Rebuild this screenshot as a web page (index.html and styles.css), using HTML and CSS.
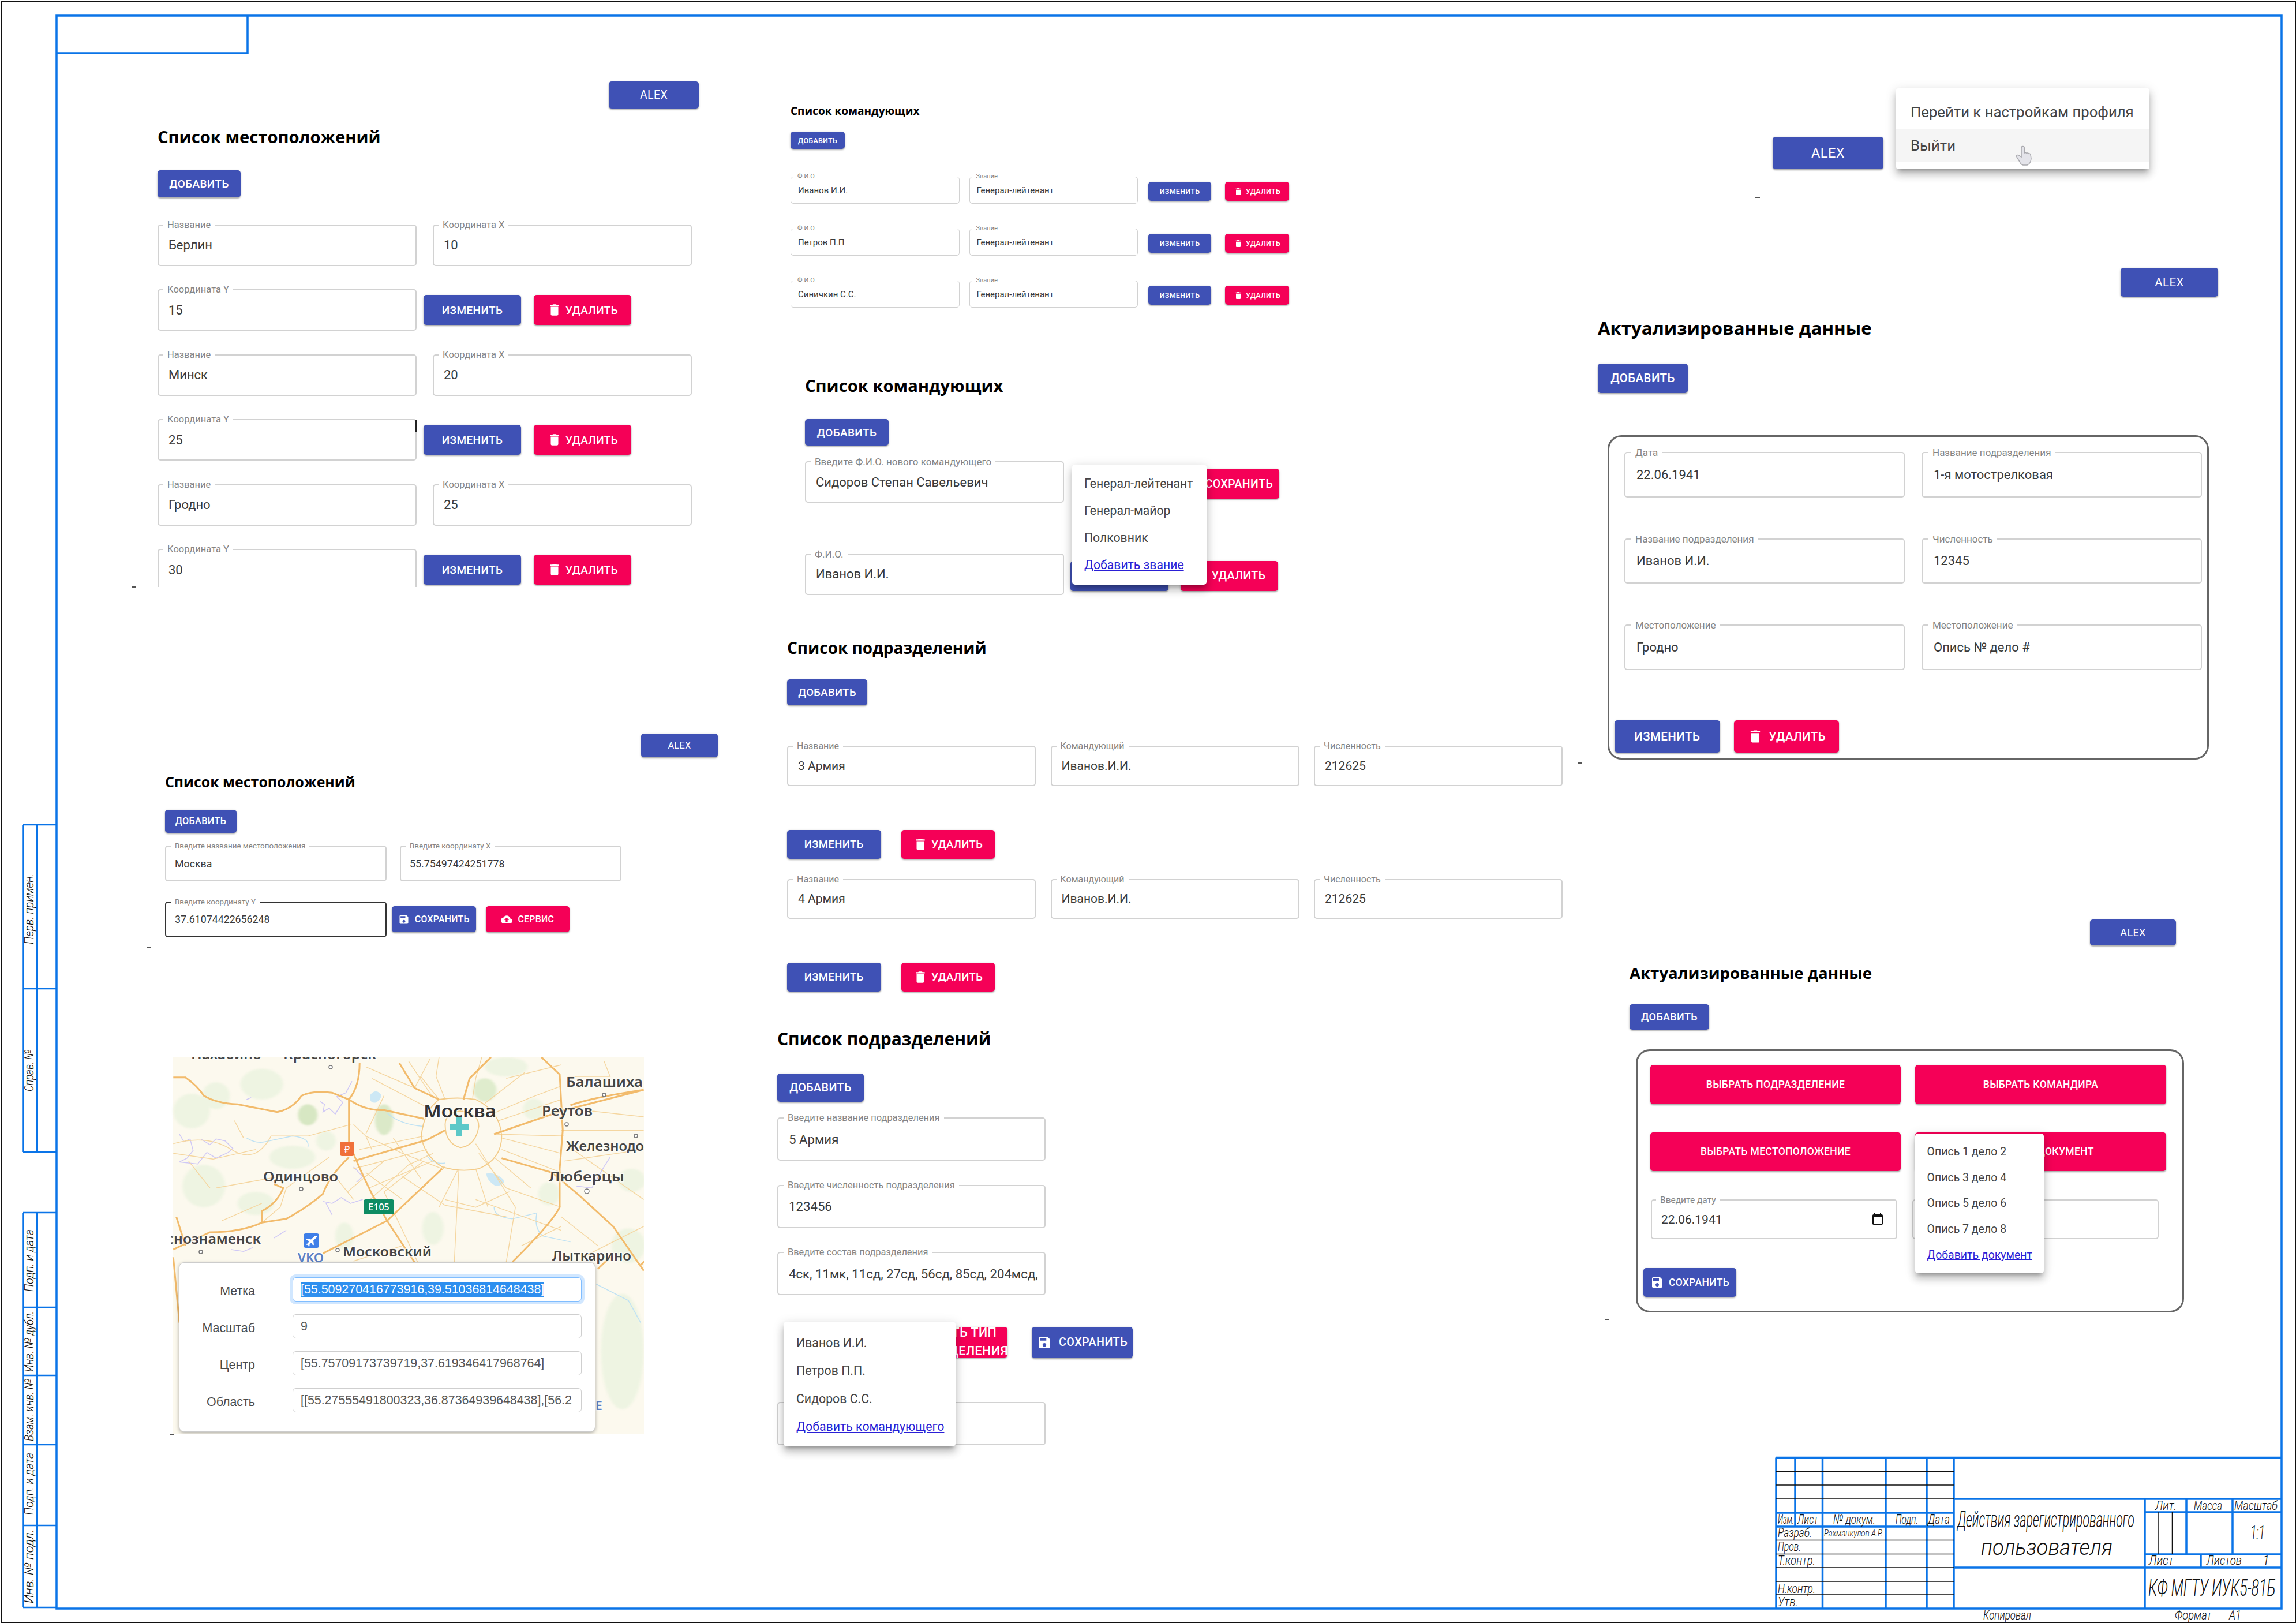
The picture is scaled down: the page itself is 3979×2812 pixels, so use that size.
FILE: index.html
```html
<!DOCTYPE html>
<html lang="ru">
<head>
    <meta charset="UTF-8">
    <title>Действия зарегистрированного пользователя</title>
    <link rel="stylesheet" href="styles.css">
</head>
<body>
<svg class="sprite" aria-hidden="true">
    <symbol id="i-trash" viewBox="0 0 24 24"><path d="M6 19c0 1.1.9 2 2 2h8c1.1 0 2-.9 2-2V7H6v12zM19 4h-3.5l-1-1h-5l-1 1H5v2h14V4z"/></symbol>
    <symbol id="i-save" viewBox="0 0 24 24"><path d="M17 3H5c-1.11 0-2 .9-2 2v14c0 1.1.89 2 2 2h14c1.1 0 2-.9 2-2V7l-4-4zm-5 16c-1.66 0-3-1.34-3-3s1.34-3 3-3 3 1.34 3 3-1.34 3-3 3zm3-10H5V5h10v4z"/></symbol>
    <symbol id="i-cloud" viewBox="0 0 24 24"><path d="M19.35 10.04C18.67 6.59 15.64 4 12 4 9.11 4 6.6 5.64 5.35 8.04 2.34 8.36 0 10.91 0 14c0 3.31 2.69 6 6 6h13c2.76 0 5-2.24 5-5 0-2.64-2.05-4.78-4.65-4.96zM14 13v4h-4v-4H7l5-5 5 5h-3z"/></symbol>
    <symbol id="i-cal" viewBox="0 0 24 24"><path d="M19 3h-1V1h-2v2H8V1H6v2H5C3.9 3 3 3.9 3 5v14c0 1.1.9 2 2 2h14c1.1 0 2-.9 2-2V5c0-1.1-.9-2-2-2zm0 16H5V8h14v11z"/></symbol>
</svg>

<div class="sheet">

    <!-- locations, list -->
    <section class="shot shot-a">
        <button class="btn blue alex">Alex</button>
        <h2>Список местоположений</h2>
        <button class="btn blue add">Добавить</button>
        <div class="list">
            <div class="row fields">
                <div class="field"><span class="label">Название</span>Берлин</div>
                <div class="field"><span class="label">Координата X</span>10</div>
            </div>
            <div class="row">
                <div class="field"><span class="label">Координата Y</span>15</div>
                <button class="btn blue edit">Изменить</button>
                <button class="btn pink del"><svg class="ico"><use href="#i-trash"/></svg>Удалить</button>
            </div>
            <div class="row fields">
                <div class="field"><span class="label">Название</span>Минск</div>
                <div class="field"><span class="label">Координата X</span>20</div>
            </div>
            <div class="row">
                <div class="field"><span class="label">Координата Y</span>25</div>
                <button class="btn blue edit">Изменить</button>
                <button class="btn pink del"><svg class="ico"><use href="#i-trash"/></svg>Удалить</button>
            </div>
            <div class="row fields">
                <div class="field"><span class="label">Название</span>Гродно</div>
                <div class="field"><span class="label">Координата X</span>25</div>
            </div>
            <div class="row">
                <div class="field"><span class="label">Координата Y</span>30</div>
                <button class="btn blue edit">Изменить</button>
                <button class="btn pink del"><svg class="ico"><use href="#i-trash"/></svg>Удалить</button>
            </div>
        </div>
    </section>

    <!-- commanders, small -->
    <section class="shot shot-b">
        <h2>Список командующих</h2>
        <button class="btn blue add">Добавить</button>
        <div class="list">
            <div class="row">
                <div class="field"><span class="label">Ф.И.О.</span>Иванов И.И.</div>
                <div class="field"><span class="label">Звание</span>Генерал-лейтенант</div>
                <button class="btn blue edit">Изменить</button>
                <button class="btn pink del"><svg class="ico"><use href="#i-trash"/></svg>Удалить</button>
            </div>
            <div class="row">
                <div class="field"><span class="label">Ф.И.О.</span>Петров П.П</div>
                <div class="field"><span class="label">Звание</span>Генерал-лейтенант</div>
                <button class="btn blue edit">Изменить</button>
                <button class="btn pink del"><svg class="ico"><use href="#i-trash"/></svg>Удалить</button>
            </div>
            <div class="row">
                <div class="field"><span class="label">Ф.И.О.</span>Синичкин С.С.</div>
                <div class="field"><span class="label">Звание</span>Генерал-лейтенант</div>
                <button class="btn blue edit">Изменить</button>
                <button class="btn pink del"><svg class="ico"><use href="#i-trash"/></svg>Удалить</button>
            </div>
        </div>
    </section>

    <!-- commanders, rank menu open -->
    <section class="shot shot-c">
        <h2>Список командующих</h2>
        <button class="btn blue add">Добавить</button>
        <div class="list">
            <div class="row">
                <div class="field"><span class="label">Введите Ф.И.О. нового командующего</span>Сидоров Степан Савельевич</div>
                <button class="btn pink save-new">Сохранить</button>
            </div>
            <div class="row">
                <div class="field"><span class="label">Ф.И.О.</span>Иванов И.И.</div>
                <button class="btn blue edit">Изменить</button>
                <button class="btn pink del"><svg class="ico"><use href="#i-trash"/></svg>Удалить</button>
            </div>
        </div>
        <ul class="menu">
            <li>Генерал-лейтенант</li>
            <li>Генерал-майор</li>
            <li>Полковник</li>
            <li><a href="#">Добавить звание</a></li>
        </ul>
    </section>

    <!-- profile menu -->
    <section class="shot shot-g">
        <button class="btn blue alex">Alex</button>
        <ul class="menu">
            <li>Перейти к настройкам профиля</li>
            <li class="hover">Выйти</li>
        </ul>
        <svg class="hand" viewBox="0 0 32 36"><path d="M10 4a2.6 2.6 0 0 1 5.2 0v9c1-.8 3-.8 3.8.4 1-.7 3-.5 3.6.8 1-.5 3-.2 3.4 1.5L27 23q-1 9-7 11h-7q-4-1-6-6L2 20q-1-3 1.5-3.5q2-.5 4 2L10 20z"/></svg>
    </section>

    <!-- actual data, filled card -->
    <section class="shot shot-h">
        <button class="btn blue alex">Alex</button>
        <h2>Актуализированные данные</h2>
        <button class="btn blue add">Добавить</button>
        <div class="card">
            <div class="grid">
                <div class="field"><span class="label">Дата</span>22.06.1941</div>
                <div class="field"><span class="label">Название подразделения</span>1-я мотострелковая</div>
                <div class="field"><span class="label">Название подразделения</span>Иванов И.И.</div>
                <div class="field"><span class="label">Численность</span>12345</div>
                <div class="field"><span class="label">Местоположение</span>Гродно</div>
                <div class="field"><span class="label">Местоположение</span>Опись № дело #</div>
            </div>
            <div class="row actions">
                <button class="btn blue edit">Изменить</button>
                <button class="btn pink del"><svg class="ico"><use href="#i-trash"/></svg>Удалить</button>
            </div>
        </div>
    </section>

    <!-- locations, new entry -->
    <section class="shot shot-d">
        <button class="btn blue alex">Alex</button>
        <h2>Список местоположений</h2>
        <button class="btn blue add">Добавить</button>
        <div class="list">
            <div class="row fields">
                <div class="field"><span class="label">Введите название местоположения</span>Москва</div>
                <div class="field"><span class="label">Введите координату X</span>55.75497424251778</div>
            </div>
            <div class="row">
                <div class="field focused"><span class="label">Введите координату Y</span>37.61074422656248</div>
                <button class="btn blue edit"><svg class="ico"><use href="#i-save"/></svg>Сохранить</button>
                <button class="btn pink del"><svg class="ico"><use href="#i-cloud"/></svg>Сервис</button>
            </div>
        </div>
    </section>

    <!-- map with the coordinates panel -->
    <section class="shot map">
        <svg class="map-art" viewBox="0 0 819 654">
            <rect x="3" width="816" height="654" fill="#fcf9ee"/>
            <g transform="translate(-2 -6) scale(.5294 .3333)">
                <g class="woods">
                    <ellipse cx="450" cy="320" rx="32" ry="55" fill="#d7e7c3"/>
                    <ellipse cx="70" cy="300" rx="60" ry="90"/>
                    <ellipse cx="150" cy="220" rx="45" ry="70"/>
                    <ellipse cx="300" cy="160" rx="70" ry="80"/>
                    <ellipse cx="700" cy="345" rx="30" ry="80" fill="#dbe9c8"/>
                    <ellipse cx="510" cy="455" rx="32" ry="50"/>
                    <ellipse cx="1030" cy="190" rx="38" ry="60" fill="#dfeccd"/>
                    <ellipse cx="1190" cy="290" rx="35" ry="55"/>
                    <ellipse cx="1100" cy="70" rx="70" ry="50"/>
                    <ellipse cx="400" cy="540" rx="75" ry="60"/>
                    <ellipse cx="110" cy="690" rx="70" ry="110"/>
                    <ellipse cx="280" cy="780" rx="60" ry="60"/>
                    <ellipse cx="860" cy="910" rx="35" ry="85"/>
                    <ellipse cx="570" cy="950" rx="30" ry="70"/>
                    <ellipse cx="1240" cy="730" rx="35" ry="60"/>
                    <ellipse cx="1500" cy="1000" rx="55" ry="90"/>
                    <ellipse cx="1510" cy="660" rx="45" ry="60"/>
                    <ellipse cx="1480" cy="1550" rx="70" ry="300"/>
                </g>
                <g class="water">
                    <path d="M655 215q15-30 30-10t-10 50q-25 10-20-40zM1035 625q30-10 55 30q10 30-25 35q-30-30-30-65z"/>
                </g>
                <g class="soft">
                    <g class="river">
                        <path d="M250 440q30 30 60 20t90-30q60 10 50 60M710 310q40 60 120 70M840 530q20 50 60 40M1060 800q0 50 60 60l80-30q-10 80 20 120l90 30M1395 1200l105 85l40 115"/>
                    </g>
                    <g class="border">
                        <path d="M490 250l15 15l-5 40l20-20l20 30l25-60l-20-30l30-20l20-60M30 420l15 40l20-15l10 60l-20 40l-25 20l60 10l30-60l30 30l40-30l15-20l-25-40l-30-10l-20 30l-30-30M250 240l15-10M500 770l30 10l30-30l30 30l40-20M510 780l20 60M200 1020l40 10l30-20M340 960l40-40M600 590l30 50l-20 30M1440 540l-20 50l-40 110l-50-10"/>
                    </g>
                    <g class="minor">
                        <path d="M945 600L930 1085M860 520L780 580L640 780M830 560L700 720L810 1085M1000 470L1130 800L1100 1085M1010 520L1100 700L1280 800M760 640L900 790L1100 850M640 430L760 520L890 600M600 370L640 430L660 500M860 230L780 40M900 240L870 120L880 20M990 230L1000 130L1020 20M1060 310L1180 230L1280 170M1060 420L1290 430M700 560L580 720M520 540L380 700L360 800L300 880M10 470Q120 420 200 500T330 430L450 430L590 370M10 520L140 550L280 500M240 440L210 350M1280 400L1550 400M1300 480L1550 760M1000 760L1280 920M600 1080L760 1000M1350 1060L1550 900M1420 40L1440 120L1300 120M900 760L1000 800L1110 720"/>
                        <path d="M600 600L840 500M620 500L830 430M650 700L860 560M780 760L900 590M880 800L940 610M1040 800L1000 600M1180 700L1060 540M1280 620L1085 500M1280 520L1085 440M1280 240L1075 350M1160 100L1030 260M820 120L880 240M660 130L840 280M700 220L640 420M640 620L760 760M730 440L820 650M540 640L600 760M150 700L360 640M60 560L130 700M170 870L300 780M1280 850L1400 1000M1150 1000L1280 900M1100 130L1280 60M850 30L800 180M640 70L800 180M1380 300L1550 330M1290 560L1550 500"/>
                    </g>
                    <g class="ring">
                        <path d="M880 240Q830 300 822 430Q830 530 890 590Q950 620 1010 600Q1085 550 1085 430Q1080 300 1000 240Q940 225 880 240Z"/>
                        <path d="M900 370Q900 310 950 300Q1010 310 1010 380Q1000 480 950 490Q900 470 900 370Z"/>
                    </g>
                    <g class="road">
                        <path d="M10 125H50Q90 170 110 220Q150 260 220 265Q300 290 350 305Q400 290 430 220Q470 190 530 205L585 240Q640 300 700 295L830 340"/>
                        <path d="M620 50Q620 170 585 240V460Q610 570 660 730L710 870L780 1040L800 1085"/>
                        <path d="M585 540Q520 640 500 730Q450 800 380 860L300 880Q230 930 130 930L10 1020"/>
                        <path d="M600 560L840 450L900 400"/>
                        <path d="M1215 20L1275 110L1285 400L1275 600V800Q1250 880 1120 1085"/>
                        <path d="M1060 420L1280 300L1550 190M1310 270Q1380 230 1550 190"/>
                        <path d="M1085 545L1250 620L1340 740L1450 900L1550 1130"/>
                        <path d="M710 870L500 1040M890 600L710 870"/>
                        <path d="M20 850L50 1000M340 680L370 700Q350 780 300 820V880"/>
                        <path d="M1050 20L980 130L960 240M750 50L800 180L880 240"/>
                        <path d="M1440 1060L1400 1120M1610 1000L1540 1100M10 1060L30 1400"/>
                    </g>
                </g>
            </g>
            <g class="dots">
                <circle cx="276" cy="18" r="3"/><circle cx="750" cy="66" r="3"/><circle cx="685" cy="117" r="3"/>
                <circle cx="805" cy="137" r="3"/><circle cx="225" cy="229" r="3"/><circle cx="720" cy="233" r="4"/>
                <circle cx="51" cy="338" r="3"/><circle cx="288" cy="335" r="3"/>
            </g>
            <g class="towns">
                <text x="34" y="4" textLength="122" lengthAdjust="spacingAndGlyphs">Нахабино</text>
                <text x="194" y="4" textLength="161" lengthAdjust="spacingAndGlyphs">Красногорск</text>
                <text x="684" y="52" textLength="133" lengthAdjust="spacingAndGlyphs">Балашиха</text>
                <text class="capital" x="437" y="105" textLength="126" lengthAdjust="spacingAndGlyphs">Москва</text>
                <text x="642" y="102" textLength="88" lengthAdjust="spacingAndGlyphs">Реутов</text>
                <text x="684" y="163" textLength="150" lengthAdjust="spacingAndGlyphs">Железнодор</text>
                <text x="654" y="216" textLength="131" lengthAdjust="spacingAndGlyphs">Люберцы</text>
                <text x="159" y="216" textLength="130" lengthAdjust="spacingAndGlyphs">Одинцово</text>
                <text x="-55" y="324" textLength="210" lengthAdjust="spacingAndGlyphs">Краснознаменск</text>
                <text x="297" y="346" textLength="154" lengthAdjust="spacingAndGlyphs">Московский</text>
                <text x="660" y="353" textLength="137" lengthAdjust="spacingAndGlyphs">Лыткарино</text>
                <text class="air" x="219" y="356" textLength="45" lengthAdjust="spacingAndGlyphs">VKO</text>
                <text class="air" x="735" y="612">E</text>
            </g>
            <rect x="292" y="147" width="25" height="25" rx="4" fill="#f0703a"/>
            <text class="badge-t" x="304.5" y="166" text-anchor="middle">₽</text>
            <rect x="333" y="247" width="53" height="26" rx="4" fill="#0e8c63"/>
            <text class="badge-t" x="359.5" y="266" text-anchor="middle">E105</text>
            <rect x="229" y="306" width="27" height="25" rx="4" fill="#3f7fe8"/>
            <path d="M249 310l-7 6.5l-7-1.500l-1.500 1.500l5 3l-2 4l-2.500 .5l-1 1.500l4 .5l1 3l1.500-1l0-3l3-3l3 5l1.500-1.500l-1-7l6-6q1.500-3-1-1.500z" fill="#fff"/>
            <path d="M494 105h10v11h11v10h-11v11h-10v-11h-11v-10h11z" fill="#5cc8c8"/>
        </svg>
        <div class="map-panel">
            <label>Метка</label><div class="coord focused"><span class="picked">[55.509270416773916,39.51036814648438]</span></div>
            <label>Масштаб</label><div class="coord">9</div>
            <label>Центр</label><div class="coord">[55.75709173739719,37.619346417968764]</div>
            <label>Область</label><div class="coord">[[55.27555491800323,36.87364939648438],[56.2</div>
        </div>
    </section>

    <!-- units, list -->
    <section class="shot shot-e">
        <h2>Список подразделений</h2>
        <button class="btn blue add">Добавить</button>
        <div class="list">
            <div class="row">
                <div class="field"><span class="label">Название</span>3 Армия</div>
                <div class="field"><span class="label">Командующий</span>Иванов.И.И.</div>
                <div class="field"><span class="label">Численность</span>212625</div>
            </div>
            <div class="row actions">
                <button class="btn blue edit">Изменить</button>
                <button class="btn pink del"><svg class="ico"><use href="#i-trash"/></svg>Удалить</button>
            </div>
            <div class="row">
                <div class="field"><span class="label">Название</span>4 Армия</div>
                <div class="field"><span class="label">Командующий</span>Иванов.И.И.</div>
                <div class="field"><span class="label">Численность</span>212625</div>
            </div>
            <div class="row actions">
                <button class="btn blue edit">Изменить</button>
                <button class="btn pink del"><svg class="ico"><use href="#i-trash"/></svg>Удалить</button>
            </div>
        </div>
    </section>

    <!-- units, commander menu open -->
    <section class="shot shot-f">
        <h2>Список подразделений</h2>
        <button class="btn blue add">Добавить</button>
        <div class="list">
            <div class="field"><span class="label">Введите название подразделения</span>5 Армия</div>
            <div class="field"><span class="label">Введите численность подразделения</span>123456</div>
            <div class="field"><span class="label">Введите состав подразделения</span>4ск, 11мк, 11сд, 27сд, 56сд, 85сд, 204мсд,</div>
            <div class="row actions">
                <button class="btn pink pick">Выбрать тип подразделения</button>
                <button class="btn blue edit"><svg class="ico"><use href="#i-save"/></svg>Сохранить</button>
            </div>
            <div class="field"></div>
        </div>
        <ul class="menu">
            <li>Иванов И.И.</li>
            <li>Петров П.П.</li>
            <li>Сидоров С.С.</li>
            <li><a href="#">Добавить командующего</a></li>
        </ul>
    </section>

    <!-- actual data, document menu open -->
    <section class="shot shot-i">
        <button class="btn blue alex">Alex</button>
        <h2>Актуализированные данные</h2>
        <button class="btn blue add">Добавить</button>
        <div class="card">
            <div class="grid picks">
                <button class="btn pink">Выбрать подразделение</button>
                <button class="btn pink">Выбрать командира</button>
                <button class="btn pink">Выбрать местоположение</button>
                <button class="btn pink">Выбрать документ</button>
            </div>
            <div class="grid">
                <div class="field"><span class="label">Введите дату</span>22.06.1941<svg class="ico cal"><use href="#i-cal"/></svg></div>
                <div class="field"></div>
            </div>
            <div class="row actions">
                <button class="btn blue edit"><svg class="ico"><use href="#i-save"/></svg>Сохранить</button>
            </div>
        </div>
        <ul class="menu">
            <li>Опись 1 дело 2</li>
            <li>Опись 3 дело 4</li>
            <li>Опись 5 дело 6</li>
            <li>Опись 7 дело 8</li>
            <li><a href="#">Добавить документ</a></li>
        </ul>
    </section>

    <!-- drawing frame and title block -->
    <svg class="frame" viewBox="0 0 3979 2812">
        <rect class="edge" x="2" y="2" width="3976" height="2809"/>
        <path class="thick" d="M98 27H3954V2787H98ZM98 27V92H429V27"/>

        <path class="thick" d="M40 1429V1996M64 1429V1996M40 2101V2785M64 2101V2785"/>
        <path class="mid" d="M40 1429H98M40 1713H98M40 1996H98M40 2101H98M40 2265H98M40 2383H98M40 2503H98M40 2643H98M40 2785H98"/>

        <path class="thick" d="M3078 2525.500H3954M3078 2525.500V2787M3111 2525.500V2645M3158.500 2525.500V2787M3268 2525.500V2787M3339 2525.500V2787M3386 2525.500V2787M3078 2621H3386M3078 2645H3386M3386 2597H3954M3386 2716H3954M3717 2597V2787M3717 2620H3954M3789 2597V2693M3869 2597V2693M3717 2693H3954M3814 2693V2716"/>
        <path class="thin" d="M3078 2549.700H3386M3078 2573H3386M3078 2597H3386M3078 2668.500H3386M3078 2692.600H3386M3078 2716H3386M3078 2740H3386M3078 2763H3386M3741 2620V2693M3764.500 2620V2693"/>

        <g class="gost">
            <text x="3081" y="2640" textLength="28" lengthAdjust="spacingAndGlyphs">Изм.</text>
            <text x="3115" y="2640" textLength="36" lengthAdjust="spacingAndGlyphs">Лист</text>
            <text x="3177" y="2640" textLength="73" lengthAdjust="spacingAndGlyphs">№ докум.</text>
            <text x="3285" y="2640" textLength="39" lengthAdjust="spacingAndGlyphs">Подп.</text>
            <text x="3341" y="2640" textLength="38" lengthAdjust="spacingAndGlyphs">Дата</text>
            <text x="3081" y="2663" textLength="59" lengthAdjust="spacingAndGlyphs">Разраб.</text>
            <text class="tiny" x="3161" y="2662" textLength="102" lengthAdjust="spacingAndGlyphs">Рахманкулов А.Р.</text>
            <text x="3081" y="2687" textLength="40" lengthAdjust="spacingAndGlyphs">Пров.</text>
            <text x="3081" y="2711" textLength="65" lengthAdjust="spacingAndGlyphs">Т.контр.</text>
            <text x="3081" y="2760" textLength="65" lengthAdjust="spacingAndGlyphs">Н.контр.</text>
            <text x="3081" y="2783" textLength="35" lengthAdjust="spacingAndGlyphs">Утв.</text>
            <text class="big" x="3392" y="2646" textLength="307" lengthAdjust="spacingAndGlyphs">Действия зарегистрированного</text>
            <text class="big" x="3433" y="2694" textLength="228" lengthAdjust="spacingAndGlyphs">пользователя</text>
            <text x="3735" y="2616" textLength="37" lengthAdjust="spacingAndGlyphs">Лит.</text>
            <text x="3802" y="2616" textLength="49" lengthAdjust="spacingAndGlyphs">Масса</text>
            <text x="3872" y="2616" textLength="75" lengthAdjust="spacingAndGlyphs">Масштаб</text>
            <text class="one" x="3900" y="2667" textLength="25" lengthAdjust="spacingAndGlyphs">1:1</text>
            <text x="3724" y="2711" textLength="43" lengthAdjust="spacingAndGlyphs">Лист</text>
            <text x="3824" y="2711" textLength="61" lengthAdjust="spacingAndGlyphs">Листов</text>
            <text x="3921" y="2711">1</text>
            <text class="huge" x="3723" y="2765" textLength="221" lengthAdjust="spacingAndGlyphs">КФ МГТУ ИУК5-81Б</text>
            <text x="3437" y="2806" textLength="83" lengthAdjust="spacingAndGlyphs">Копировал</text>
            <text x="3769" y="2806" textLength="64" lengthAdjust="spacingAndGlyphs">Формат</text>
            <text x="3863" y="2806" textLength="21" lengthAdjust="spacingAndGlyphs">А1</text>

            <text transform="translate(58 1636) rotate(-90)" textLength="122" lengthAdjust="spacingAndGlyphs">Перв. примен.</text>
            <text transform="translate(58 1891) rotate(-90)" textLength="72" lengthAdjust="spacingAndGlyphs">Справ. №</text>
            <text transform="translate(58 2238) rotate(-90)" textLength="108" lengthAdjust="spacingAndGlyphs">Подп. и дата</text>
            <text transform="translate(58 2377) rotate(-90)" textLength="105" lengthAdjust="spacingAndGlyphs">Инв. № дубл.</text>
            <text transform="translate(58 2497) rotate(-90)" textLength="108" lengthAdjust="spacingAndGlyphs">Взам. инв. №</text>
            <text transform="translate(58 2625) rotate(-90)" textLength="108" lengthAdjust="spacingAndGlyphs">Подп. и дата</text>
            <text transform="translate(58 2778) rotate(-90)" textLength="128" lengthAdjust="spacingAndGlyphs">Инв. № подл.</text>
        </g>

        <!-- stray marks left on the sheet -->
        <path class="marks" d="M228 1017h8M3042 342h8M2734 1322h8M254 1642h8M2781 2286h8M295 2485h6"/>
        <path class="caret" d="M721 727V748"/>
    </svg>
</div>
</body>
</html>
```

FILE: styles.css
```css
* {
    box-sizing: border-box;
}
body {
    margin: 0;
    background-color: #fff;
    font-family: Roboto, "Liberation Sans", sans-serif;
}
.sprite {
    display: none;
}
.sheet {
    position: relative;
    width: 3979px;
    height: 2812px;
    overflow: hidden;
}

/* each screenshot sits on the sheet where it was pasted */
.shot {
    position: absolute;
    display: flex;
    flex-direction: column;
    align-items: flex-start;
}
h2 {
    margin: 0;
    height: 40px;
    line-height: 40px;
    font-family: "Open Sans", sans-serif;
    font-weight: 700;
    color: #000;
    white-space: nowrap;
}
.row {
    display: flex;
    align-items: center;
}
.list {
    display: flex;
    flex-direction: column;
    align-items: flex-start;
}

/* buttons */
.btn {
    display: inline-flex;
    align-items: center;
    justify-content: center;
    flex: none;
    padding: 0;
    border: none;
    border-radius: 5px;
    font-family: Roboto, sans-serif;
    font-weight: 500;
    letter-spacing: .02em;
    text-transform: uppercase;
    color: #fff;
    box-shadow: 0 2px 2px rgba(0, 0, 0, .25), 0 1px 4px rgba(0, 0, 0, .15);
}
.blue {
    background-color: #3f51b5;
}
.pink {
    background-color: #f50057;
}
.alex {
    align-self: flex-end;
    font-weight: 400;
}
.ico {
    flex: none;
    fill: currentColor;
}

/* outlined text fields */
.field {
    position: relative;
    display: flex;
    align-items: center;
    flex: none;
    height: var(--field-h);
    width: var(--field-w);
    padding: 0 var(--pad);
    border: 2px solid #d2d2d2;
    border-radius: 5px;
    background-color: #fff;
    font-size: var(--fs);
    color: #3a3a3a;
    white-space: nowrap;
}
.field.focused {
    border-color: #333;
}
.label {
    position: absolute;
    left: calc(var(--pad) - 9px);
    top: 0;
    transform: translateY(-50%);
    margin-top: -1px;
    padding: 0 7px;
    background-color: #fff;
    font-size: var(--label);
    line-height: 1.2;
    color: #858585;
}

/* MUI style popover */
.menu {
    position: absolute;
    z-index: 2;
    margin: 0;
    padding: 0;
    list-style: none;
    background-color: #fff;
    border-radius: 5px;
    color: #444;
    box-shadow: 0 6px 7px -4px rgba(0, 0, 0, .3), 0 10px 14px 1px rgba(0, 0, 0, .16), 0 4px 18px 3px rgba(0, 0, 0, .1);
    display: flex;
    flex-direction: column;
}
.menu li {
    display: flex;
    align-items: center;
    white-space: nowrap;
}
.menu a {
    color: #2a1fd6;
}

/* frame card */
.card {
    position: relative;
    border: 3px solid #666;
    border-radius: 24px;
    background-color: #fff;
}
.grid {
    display: grid;
}

/* ---- shot A: locations ---- */
.shot-a {
    left: 273px;
    top: 141px;
    width: 938px;
    --field-h: 72px;
    --field-w: 449px;
    --pad: 17px;
    --fs: 22px;
    --label: 16.5px;
}
.shot-a .alex {
    width: 156px;
    height: 47px;
    font-size: 19.5px;
}
.shot-a h2 {
    margin-top: 29px;
    font-size: 29.200px;
}
.shot-a .add {
    margin-top: 38px;
    width: 144px;
    height: 47px;
    font-size: 19px;
}
.shot-a .list {
    margin-top: 34.5px;
    padding-top: 12px;
    height: 640.5px;
    overflow: hidden;
    gap: 40.5px;
    width: 938px;
}
.shot-a .fields {
    gap: 28px;
}
.shot-a .btn.edit,
.shot-a .btn.del {
    height: 52px;
    width: 169px;
    font-size: 19px;
}
.shot-a .edit {
    margin-left: 12px;
}
.shot-a .del {
    margin-left: 22px;
    gap: 6px;
}
.shot-a .ico {
    width: 26px;
    height: 26px;
}

/* ---- shot B: commanders small ---- */
.shot-b {
    left: 1370px;
    top: 172px;
    --field-h: 47px;
    --field-w: 292.500px;
    --pad: 12px;
    --fs: 15px;
    --label: 11px;
}
.shot-b h2 {
    font-size: 19px;
}
.shot-b .add {
    margin-top: 16px;
    width: 94px;
    height: 30px;
    font-size: 12.500px;
}
.shot-b .list {
    margin-top: 48px;
    gap: 43px;
}
.shot-b .row {
    gap: 17px;
}
.shot-b .field {
    border-width: 1.500px;
}
.shot-b .label {
    left: 6px;
    padding: 0 5px;
}
.shot-b .edit,
.shot-b .del {
    height: 33.500px;
    margin-top: 4px;
    font-size: 12.500px;
}
.shot-b .edit {
    width: 109px;
    margin-left: 1px;
}
.shot-b .del {
    width: 111px;
    margin-left: 7px;
    gap: 5px;
}
.shot-b .ico {
    width: 16px;
    height: 16px;
}

/* ---- shot C: commanders with rank menu ---- */
.shot-c {
    left: 1395px;
    top: 648px;
    --field-h: 72px;
    --field-w: 449px;
    --pad: 17px;
    --fs: 22px;
    --label: 17px;
}
.shot-c h2 {
    font-size: 29.200px;
}
.shot-c .add {
    margin-top: 38px;
    width: 145px;
    height: 46px;
    font-size: 19px;
}
.shot-c .list {
    margin-top: 27px;
    gap: 87.500px;
}
.shot-c .save-new {
    margin: 6px 0 0 162px;
    width: 211px;
    height: 52px;
    padding-right: 11px;
    justify-content: flex-end;
    font-size: 19.500px;
}
.shot-c .edit {
    margin: 6px 0 0 11px;
    width: 170px;
    height: 52px;
    font-size: 19.500px;
}
.shot-c .del {
    margin: 6px 0 0 21px;
    width: 169px;
    height: 52px;
    gap: 6px;
    font-size: 19.500px;
}
.shot-c .ico {
    width: 26px;
    height: 26px;
}
.shot-c .menu {
    left: 463px;
    top: 157px;
    width: 233px;
    height: 208px;
    padding: 9px 0 11px 21px;
    font-size: 21.200px;
}
.shot-c .menu li {
    height: 47px;
}

/* ---- shot G: profile menu ---- */
.shot-g {
    left: 3072px;
    top: 153px;
    width: 652.500px;
    height: 140px;
    justify-content: flex-end;
}
.shot-g .alex {
    align-self: flex-start;
    width: 192px;
    height: 56.500px;
    font-size: 23.500px;
}
.shot-g .menu {
    right: 0;
    top: 0;
    width: 438.500px;
    height: 140px;
    padding: 12px 0;
    border-radius: 4px;
    font-size: 25.700px;
}
.shot-g .menu li {
    height: 58px;
    padding: 0 25px;
}
.shot-g .hover {
    background-color: #f5f5f5;
}
.hand {
    position: absolute;
    z-index: 3;
    left: 421px;
    top: 99px;
    width: 32px;
    height: 36px;
    fill: #e4e4ea;
    stroke: #a8a8ad;
    stroke-width: 1.500;
}

/* ---- shot H: actual data card ---- */
.shot-h {
    left: 2769px;
    top: 464px;
    width: 1075px;
    --field-h: 78.500px;
    --field-w: 486px;
    --pad: 19px;
    --fs: 22px;
    --label: 17px;
}
.shot-h .alex {
    width: 169px;
    height: 50px;
    font-size: 20.500px;
}
.shot-h h2 {
    margin-top: 34px;
    font-size: 31.200px;
}
.shot-h .add {
    margin-top: 41.500px;
    width: 156px;
    height: 51.500px;
    font-size: 20.500px;
}
.shot-h .card {
    margin: 73px 0 0 17px;
    width: 1042px;
    height: 562px;
    padding: 26px;
}
.shot-h .grid {
    grid-template-columns: 486px 486px;
    column-gap: 29px;
    row-gap: 71px;
}
.shot-h .actions {
    margin: 87px 0 0 -17px;
    gap: 24px;
}
.shot-h .edit,
.shot-h .del {
    width: 182.500px;
    height: 56px;
    font-size: 20.500px;
}
.shot-h .del {
    gap: 10px;
}
.shot-h .ico {
    width: 28px;
    height: 28px;
}

/* ---- shot D: new location ---- */
.shot-d {
    left: 286px;
    top: 1271px;
    width: 958px;
    --field-h: 62px;
    --field-w: 384px;
    --pad: 15px;
    --fs: 17.800px;
    --label: 13.400px;
}
.shot-d .alex {
    width: 133px;
    height: 41px;
    font-size: 16.300px;
}
.shot-d h2 {
    margin-top: 21.500px;
    font-size: 24.900px;
}
.shot-d .add {
    margin-top: 29px;
    width: 124px;
    height: 40.500px;
    font-size: 16.300px;
}
.shot-d .list {
    margin-top: 22px;
    gap: 34.600px;
}
.shot-d .fields {
    gap: 23px;
}
.shot-d .label {
    left: 8px;
}
.shot-d .edit,
.shot-d .del {
    width: 145.500px;
    height: 45.500px;
    font-size: 15.800px;
    gap: 9px;
}
.shot-d .edit {
    margin-left: 9px;
}
.shot-d .del {
    margin-left: 17px;
}
.shot-d .ico {
    width: 20px;
    height: 20px;
}

/* ---- map ---- */
.map {
    left: 297px;
    top: 1831px;
    width: 819px;
    height: 654px;
    overflow: hidden;
}
.map-art {
    display: block;
    width: 819px;
    height: 654px;
}
.map-art path,
.map-art ellipse {
    vector-effect: non-scaling-stroke;
}
.woods {
    fill: #eef4e2;
    filter: blur(4px);
}
.water {
    fill: #cde8f5;
    filter: blur(1px);
}
.soft {
    filter: blur(.5px);
}
.river path,
.border path,
.minor path,
.ring path,
.road path {
    fill: none;
}
.river path {
    stroke: #bfe2f4;
    stroke-width: 1.500px;
}
.border path {
    stroke: #cfc8f6;
    stroke-width: 1.500px;
}
.minor path {
    stroke: #f5d6a0;
    stroke-width: 1.400px;
}
.ring path {
    stroke: #f3cb88;
    stroke-width: 1.800px;
}
.road path {
    stroke: #f2bb6c;
    stroke-width: 3px;
}
.dots circle {
    fill: #fff;
    stroke: #777;
    stroke-width: 1.500px;
}
.towns text {
    font-family: "Noto Sans", sans-serif;
    font-weight: 600;
    font-size: 24px;
    fill: #454545;
    paint-order: stroke;
    stroke: rgba(255, 255, 255, .6);
    stroke-width: 3px;
}
.towns .capital {
    font-size: 31px;
    fill: #333;
}
.towns .air {
    fill: #5b80c4;
    font-size: 21px;
}
.badge-t {
    font-family: "Noto Sans", sans-serif;
    font-size: 16px;
    font-weight: 500;
    fill: #fff;
}
.map-panel {
    position: absolute;
    left: 13px;
    top: 356px;
    width: 722px;
    height: 294px;
    padding: 25px 25px 0 0;
    display: grid;
    grid-template-columns: 131px 501px;
    column-gap: 65px;
    row-gap: 22px;
    grid-auto-rows: 42px;
    background-color: #fff;
    border: 1px solid #ccc;
    border-radius: 9px;
    box-shadow: 0 2px 6px rgba(0, 0, 0, .3);
    font-family: "Liberation Sans", Arial, sans-serif;
    font-size: 21.400px;
    color: #4a4a4a;
}
.map-panel label {
    align-self: center;
    margin-top: 6px;
    text-align: right;
}
.coord {
    display: flex;
    align-items: center;
    padding: 0 13px;
    border: 1.500px solid #cfcfcf;
    border-radius: 6px;
    white-space: nowrap;
    overflow: hidden;
    color: #555;
}
.coord.focused {
    border-color: #80bdff;
    box-shadow: 0 0 0 5px rgba(0, 123, 255, .18);
    overflow: visible;
}
.picked {
    background-color: #2e8fef;
    color: #fff;
}

/* ---- shot E: units ---- */
.shot-e {
    left: 1364px;
    top: 1102px;
    --field-h: 69.500px;
    --field-w: 431px;
    --pad: 17px;
    --fs: 21px;
    --label: 16px;
}
.shot-e h2 {
    font-size: 28px;
}
.shot-e .add {
    margin-top: 35px;
    width: 139px;
    height: 45px;
    font-size: 18.500px;
}
.shot-e .list {
    margin-top: 70px;
}
.shot-e .row {
    gap: 25.500px;
}
.shot-e .actions {
    gap: 35px;
    margin: 76px 0 35px;
}
.shot-e .edit,
.shot-e .del {
    width: 162.500px;
    height: 50px;
    font-size: 18.500px;
}
.shot-e .del {
    gap: 6px;
}
.shot-e .ico {
    width: 26px;
    height: 26px;
}

/* ---- shot F: units with menu ---- */
.shot-f {
    left: 1347px;
    top: 1780px;
    --field-h: 75px;
    --field-w: 465px;
    --pad: 18px;
    --fs: 22.200px;
    --label: 16.400px;
}
.shot-f h2 {
    font-size: 30px;
}
.shot-f .add {
    margin-top: 40px;
    width: 150px;
    height: 49px;
    font-size: 19.800px;
}
.shot-f .list {
    margin-top: 27px;
    gap: 41.500px;
}
.shot-f .actions {
    margin: 13px 0 35px;
    align-items: flex-start;
}
.shot-f .pick {
    margin-left: 211px;
    width: 188px;
    height: 53.500px;
    line-height: 32px;
    font-size: 21.500px;
}
.shot-f .edit {
    margin-left: 42px;
    width: 175px;
    height: 54px;
    gap: 12px;
    font-size: 19.800px;
}
.shot-f .ico {
    width: 26px;
    height: 26px;
}
.shot-f .menu {
    left: 11px;
    top: 510px;
    width: 298px;
    height: 216px;
    padding: 12px 0 10px 22px;
    font-size: 21.300px;
}
.shot-f .menu li {
    height: 48.500px;
}

/* ---- shot I: actual data picks ---- */
.shot-i {
    left: 2824px;
    top: 1593px;
    width: 947px;
    --field-h: 69px;
    --field-w: 427px;
    --pad: 16px;
    --fs: 21px;
    --label: 15.500px;
}
.shot-i .alex {
    width: 149px;
    height: 44.500px;
    font-size: 18px;
}
.shot-i h2 {
    margin-top: 27.500px;
    font-size: 27.600px;
}
.shot-i .add {
    margin-top: 34.500px;
    width: 138px;
    height: 44px;
    font-size: 18px;
}
.shot-i .card {
    margin: 34.500px 0 0 11px;
    width: 950px;
    height: 456px;
    padding: 24px 22px;
}
.shot-i .picks {
    grid-template-columns: 434px 435px;
    column-gap: 25px;
    row-gap: 49px;
    grid-auto-rows: 67.500px;
    margin-bottom: 49px;
}
.shot-i .picks .btn {
    font-size: 17.500px;
}
.shot-i .grid:not(.picks) {
    grid-template-columns: 427px 427px;
    column-gap: 26px;
    margin-left: 1px;
}
.shot-i .cal {
    margin-left: auto;
    margin-right: 4px;
    color: #111;
    width: 24px;
    height: 24px;
}
.shot-i .actions {
    margin: 50px 0 0 -12px;
}
.shot-i .edit {
    width: 161px;
    height: 49.500px;
    gap: 8px;
    font-size: 17.500px;
}
.shot-i .edit .ico {
    width: 24px;
    height: 24px;
}
.shot-i .menu {
    left: 495px;
    top: 371px;
    width: 222.500px;
    height: 242px;
    padding: 9px 0 9px 20.500px;
    font-size: 19.500px;
}
.shot-i .menu li {
    height: 44.700px;
}

/* ---- drawing frame ---- */
.frame {
    position: absolute;
    left: 0;
    top: 0;
    width: 3979px;
    height: 2812px;
    pointer-events: none;
}
.frame path,
.frame rect {
    fill: none;
}
.edge {
    stroke: #111;
    stroke-width: 2px;
}
.thick {
    stroke: #0a74e8;
    stroke-width: 3.500px;
}
.mid {
    stroke: #0a74e8;
    stroke-width: 2.500px;
}
.thin {
    stroke: #111;
    stroke-width: 1.500px;
}
.marks {
    stroke: #555;
    stroke-width: 2px;
}
.caret {
    stroke: #222;
    stroke-width: 2px;
}
.gost text {
    font-family: Roboto, "Liberation Sans", sans-serif;
    font-style: italic;
    font-weight: 300;
    font-size: 22px;
    fill: #111;
}
.gost .tiny {
    font-size: 17px;
}
.gost .big {
    font-size: 38px;
}
.gost .one {
    font-size: 34px;
}
.gost .huge {
    font-size: 40px;
}
```
